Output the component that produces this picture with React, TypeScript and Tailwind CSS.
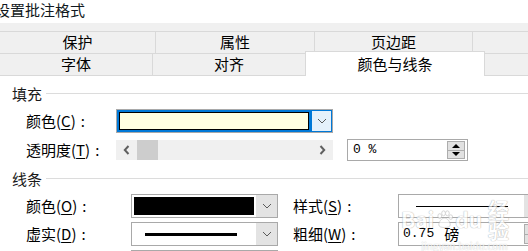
import type { ReactNode } from 'react'

const LINE = 'bg-[#dcdcdc]'

function Chevron({ className = '' }: { className?: string }) {
  return (
    <svg width="10" height="6" viewBox="0 0 10 6" className={className}>
      <polyline points="1,1 5,5 9,1" fill="none" stroke="#5a5a5a" strokeWidth="1" />
    </svg>
  )
}

function Label({ text, hotkey, className = '' }: { text: string; hotkey: string; className?: string }) {
  return (
    <span className={`shrink-0 whitespace-nowrap leading-[16px] ${className}`}>
      {text}(<span className="underline underline-offset-2">{hotkey}</span>)<span className="ml-[5px]">:</span>
    </span>
  )
}

function SectionHeader({ title }: { title: string }) {
  return (
    <div className="flex h-[15px] items-center pl-[12px]">
      <span className="leading-[15px] text-[#1a1a1a]">{title}</span>
      <div className={`ml-[4px] h-px flex-1 ${LINE}`} />
    </div>
  )
}

function GrayDrop({ children, width }: { children: ReactNode; width: string }) {
  return (
    <div className={`flex h-[24px] shrink-0 border border-[#a9a9a9] bg-white ${width}`}>
      <div className="flex min-w-0 flex-1 items-center p-[2px]">{children}</div>
      <div className="flex w-[21px] shrink-0 items-center justify-center bg-[#e3e3e3]">
        <Chevron />
      </div>
    </div>
  )
}

export default function App() {
  return (
    <div className="relative h-[251px] w-[528px] overflow-hidden bg-white font-['Noto_Sans_CJK_SC','Noto_Sans',sans-serif] text-[15px] text-black">
      {/* title */}
      <div className="h-[23px] pt-[2px] leading-[15px] whitespace-nowrap text-[#101820] -ml-[5px]">设置批注格式</div>

      {/* tabs */}
      <div className="bg-[#f0f0f0] pt-[8px]">
        <div className="flex h-[22px] overflow-hidden border-t border-[#d9d9d9]">
          <div className="flex w-[156px] shrink-0 items-center justify-center border-r border-[#d9d9d9]">保护</div>
          <div className="flex w-[159px] shrink-0 items-center justify-center border-r border-[#d9d9d9]">属性</div>
          <div className="flex w-[158px] shrink-0 items-center justify-center border-r border-[#d9d9d9]">页边距</div>
          <div className="flex w-[174px] shrink-0 items-center justify-center">可选文字</div>
        </div>
        <div className="relative -mt-[2px] flex h-[25px] items-end">
          <div className="flex h-[23px] w-[153px] shrink-0 items-center justify-center border-y border-r border-[#d9d9d9]">字体</div>
          <div className="flex h-[23px] w-[152px] shrink-0 items-center justify-center border-y border-[#d9d9d9]">对齐</div>
          <div className="relative flex h-[25px] w-[180px] shrink-0 items-center justify-center border-x border-t border-[#d9d9d9] bg-white pt-[1px]">颜色与线条</div>
          <div className="h-[23px] flex-1 border-y border-[#d9d9d9]" />
        </div>
      </div>

      {/* fill */}
      <div className="mt-[10px]">
        <SectionHeader title="填充" />
        <div className="mt-[8px] flex items-center pl-[26px]">
          <div className="w-[90px] shrink-0">
            <Label text="颜色" hotkey="C" />
          </div>
          <div className="flex h-[24px] w-[217px] border border-[#a9a9a9]">
            <div className="flex-1 border-2 border-[#0078d7]">
              <div className="h-full border border-black bg-[#ffffe1]" />
            </div>
            <div className="flex w-[21px] items-center justify-center border border-[#0078d7] bg-[#e5f1fb]">
              <Chevron />
            </div>
          </div>
        </div>
        <div className="mt-[6px] flex h-[22px] items-center pl-[26px]">
          <div className="w-[90px] shrink-0">
            <Label text="透明度" hotkey="T" />
          </div>
          <div className="flex h-[20px] w-[217px] items-stretch bg-[#f0f0f0]">
            <div className="flex w-[21px] items-center justify-center">
              <svg width="7" height="10" viewBox="0 0 7 10">
                <polyline points="5.5,1 1.8,5 5.5,9" fill="none" stroke="#606060" strokeWidth="2" />
              </svg>
            </div>
            <div className="w-[21px] bg-[#cdcdcd]" />
            <div className="flex-1" />
            <div className="flex w-[21px] items-center justify-center">
              <svg width="7" height="10" viewBox="0 0 7 10">
                <polyline points="1.5,1 5.2,5 1.5,9" fill="none" stroke="#606060" strokeWidth="2" />
              </svg>
            </div>
          </div>
          <div className="ml-[14px] flex h-[22px] w-[121px] items-center border border-[#a9a9a9] bg-white pr-[2px]">
            <span className="flex-1 whitespace-pre pl-[5px] font-['Liberation_Mono',monospace] text-[13px] leading-[16px]">0 %</span>
            <div className="flex h-[18px] w-[18px] flex-col">
              <div className="flex flex-1 items-center justify-center border border-[#adadad] bg-[#e1e1e1]">
                <svg width="8" height="4" viewBox="0 0 8 4">
                  <polygon points="0,4 4,0 8,4" fill="#000" />
                </svg>
              </div>
              <div className="flex flex-1 items-center justify-center border border-t-0 border-[#adadad] bg-[#e1e1e1]">
                <svg width="8" height="4" viewBox="0 0 8 4">
                  <polygon points="0,0 8,0 4,4" fill="#000" />
                </svg>
              </div>
            </div>
          </div>
        </div>
      </div>

      {/* lines */}
      <div className="mt-[10px]">
        <SectionHeader title="线条" />
        <div className="mt-[8px] flex items-center pl-[26px]">
          <div className="w-[105px] shrink-0">
            <Label text="颜色" hotkey="O" />
          </div>
          <GrayDrop width="w-[147px]">
            <div className="h-full w-full bg-black" />
          </GrayDrop>
          <div className="ml-[15px] w-[105px] shrink-0">
            <Label text="样式" hotkey="S" />
          </div>
          <GrayDrop width="w-[148px]">
            <div className="flex w-full justify-center">
              <div className="h-px w-[92px] bg-black" />
            </div>
          </GrayDrop>
        </div>
        <div className="mt-[4px] flex items-center pl-[26px]">
          <div className="w-[105px] shrink-0">
            <Label text="虚实" hotkey="D" />
          </div>
          <GrayDrop width="w-[147px]">
            <div className="flex w-full justify-center pr-[6px]">
              <div className="h-[3px] w-[92px] bg-black" />
            </div>
          </GrayDrop>
          <div className="ml-[15px] w-[105px] shrink-0">
            <Label text="粗细" hotkey="W" />
          </div>
          <div className="flex h-[24px] w-[148px] shrink-0 items-center border border-[#a9a9a9] bg-white">
            <span className="flex flex-1 items-center pl-[4px] leading-[16px]">
              <span className="font-['Liberation_Mono',monospace] text-[13px]">0.75</span>
              <span className="ml-[10px]">磅</span>
            </span>
            <div className="flex h-[20px] w-[21px] flex-col">
              <div className="flex-1 border border-[#adadad] bg-[#e1e1e1]" />
              <div className="flex-1 border border-t-0 border-[#adadad] bg-[#e1e1e1]" />
            </div>
          </div>
        </div>
        <div className="mt-[4px] flex pl-[131px]">
          <GrayDrop width="w-[147px]">
            <div />
          </GrayDrop>
        </div>
      </div>

      {/* watermark */}
      <div className="pointer-events-none absolute left-[401px] top-[199px] flex flex-col items-center opacity-70">
        <div className="flex items-center text-[21px] font-bold leading-[20px] text-white [text-shadow:0_0_1px_#9a9a9a,0_0_1px_#9a9a9a]">
          <span>Bai</span>
          <svg width="20" height="20" viewBox="0 0 20 20" className="mx-[1px]">
            <g fill="#fff" stroke="#b5b5b5" strokeWidth="0.8">
              <ellipse cx="5" cy="7" rx="2" ry="2.6" />
              <ellipse cx="9" cy="4" rx="2" ry="2.6" />
              <ellipse cx="13" cy="4" rx="2" ry="2.6" />
              <ellipse cx="16.5" cy="8" rx="2" ry="2.4" />
              <path d="M10 9c-3 0-6 4-6 7 0 2 2 3 6 3s6-1 6-3c0-3-3-7-6-7z" />
            </g>
          </svg>
          <span>du</span>
          <span className="ml-[6px]">经验</span>
        </div>
        <div className="mt-[2px] text-[10px] leading-[10px] text-white [text-shadow:0_0_1px_#9a9a9a]">jingyan.baidu.com</div>
      </div>
    </div>
  )
}
